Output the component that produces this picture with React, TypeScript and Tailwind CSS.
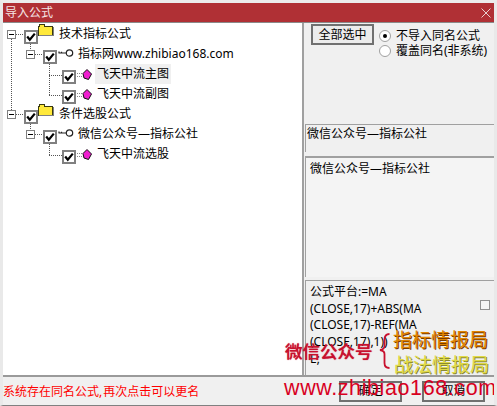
import React from "react";

const font = { fontFamily: '"Noto Sans", "Noto Sans CJK SC", sans-serif' };

function Check() {
  return (
    <span className="flex h-[14px] w-[14px] shrink-0 items-center justify-center border-2 border-[#808080] bg-white">
      <svg width="10" height="10" viewBox="0 0 10 10">
        <path d="M1.2 4.5 L3.8 7.8 L8.8 1.6" fill="none" stroke="#000" strokeWidth="2.2" />
      </svg>
    </span>
  );
}

function Expander() {
  return (
    <span className="flex h-[9px] w-[9px] shrink-0 items-center justify-center border border-[#808080] bg-white">
      <span className="h-px w-[5px] bg-black" />
    </span>
  );
}

function Folder() {
  return (
    <svg width="16" height="14" viewBox="0 0 16 14" className="shrink-0" shapeRendering="crispEdges">
      <path d="M0.5 3.5 H1.5 V1.5 H6.5 V3.5 H14.5 V12.5 H0.5 Z" fill="#ffe93b" stroke="#3a3a10" />
      <rect x="1" y="12" width="14" height="1" fill="#808080" />
      <rect x="15" y="4" width="1" height="9" fill="#808080" />
    </svg>
  );
}

function Key() {
  return (
    <svg width="16" height="10" viewBox="0 0 16 10" className="shrink-0">
      <circle cx="11.5" cy="5" r="3.2" fill="#fff" stroke="#222" strokeWidth="1.2" />
      <path d="M8 5 H0.5 M1 5 V3.5 M3.5 5 V3.8" stroke="#222" strokeWidth="1.2" fill="none" />
    </svg>
  );
}

function Gem() {
  return (
    <svg width="15" height="12" viewBox="0 0 15 12" className="shrink-0">
      <path d="M0 4.5 H6 M0 7.5 H6" stroke="#888" strokeWidth="1" strokeDasharray="1 1" />
      <path d="M10 0.5 L14.5 5 L11.5 10.5 L7 9 L6 4.5 Z" fill="#f01fd0" stroke="#111" strokeWidth="1" />
    </svg>
  );
}

function Row({ level, kind, label, selected }: { level: number; kind: "folder" | "key" | "gem"; label: string; selected?: boolean }) {
  const pad = level === 0 ? "pl-[4px]" : level === 1 ? "pl-[23px]" : "pl-[59px]";
  return (
    <div className={`flex h-[20px] items-center ${pad}`}>
      {level < 2 && <Expander />}
      {level < 2 && <span className="w-[8px] shrink-0" />}
      <span className="mt-[6px]">
        <Check />
      </span>
      {kind === "folder" && (
        <span className="-mt-[8px]">
          <Folder />
        </span>
      )}
      {kind === "key" && (
        <span className="ml-[1px] -mt-[3px]">
          <Key />
        </span>
      )}
      {kind === "gem" && (
        <span className="ml-[1px] mt-[1px]">
          <Gem />
        </span>
      )}
      <span
        className={`flex h-[20px] items-center whitespace-nowrap px-[2px] text-[12px] text-black ${selected ? "bg-[#f0f0f0]" : ""} ${kind === "gem" ? "ml-[3px]" : kind === "key" ? "ml-[2px]" : "ml-[3px]"}`}
      >
        {label}
      </span>
    </div>
  );
}

function WinButton({ children }: { children: React.ReactNode }) {
  return (
    <button className="flex h-[21px] w-[63px] items-center justify-center border-2 border-[#707070] bg-[#ececec] text-[12px] text-black">
      {children}
    </button>
  );
}

function Radio({ on, label }: { on?: boolean; label: string }) {
  return (
    <div className="flex h-[15px] items-center gap-[5px]">
      <span className="flex h-[12px] w-[12px] items-center justify-center rounded-full border border-[#a0a0a0] bg-white">
        {on && <span className="h-[4px] w-[4px] rounded-full bg-black" />}
      </span>
      <span className="whitespace-nowrap text-[12px] leading-none text-black">{label}</span>
    </div>
  );
}

function TreeLines() {
  return (
    <svg width="80" height="150" className="absolute left-0 top-0" shapeRendering="crispEdges">
      <g stroke="#555" strokeDasharray="1 1" fill="none">
        <path d="M8 16 V88" />
        <path d="M13 11 H21" />
        <path d="M27 21 V27" />
        <path d="M32 31 H40" />
        <path d="M46 41 V72 M46 52 H59 M46 72 H59" />
        <path d="M13 91 H21" />
        <path d="M27 101 V107" />
        <path d="M32 111 H40" />
        <path d="M46 121 V132 M46 132 H59" />
      </g>
    </svg>
  );
}

function Brace() {
  return (
    <svg width="12" height="36" viewBox="0 0 12 36" className="absolute left-[376px] top-[330px]">
      <path
        d="M10.5 1 C6.5 1 5.5 3 5.5 7 V13 C5.5 15.5 4 16.5 1 17 C4 17.5 5.5 18.5 5.5 21 V30 C5.5 33.5 7 35 10.5 35"
        fill="none"
        stroke="#c8102e"
        strokeWidth="1.8"
      />
    </svg>
  );
}

export default function App() {
  return (
    <div
      className="relative flex h-[406px] w-[497px] flex-col overflow-hidden border-x-[3px] border-t-[3px] border-b border-x-[#e9e9e9] border-t-[#ececec] border-b-[#808080] bg-[#f0f0f0]"
      style={font}
    >
      <div className="flex h-[20px] shrink-0 items-center justify-between border-b border-b-[#8a8a8a] bg-[#b03035] pl-[2px] pr-[3px]">
        <span className="text-[12px] leading-none text-[#f5e6e6]">导入公式</span>
        <svg width="10" height="10" viewBox="0 0 10 10">
          <path d="M0.5 0.5 L9.5 9.5 M9.5 0.5 L0.5 9.5" stroke="#e8d0d0" strokeWidth="1" />
        </svg>
      </div>

      <div className="flex h-[354px] shrink-0 border-b-2 border-b-[#9a9a9a]">
        <div className="relative w-[301px] shrink-0 border-r-2 border-r-[#a0a0a0] bg-white pt-[1px]">
          <TreeLines />
          <div className="relative">
            <Row level={0} kind="folder" label="技术指标公式" />
            <Row level={1} kind="key" label="指标网www.zhibiao168.com" />
            <Row level={2} kind="gem" label="飞天中流主图" selected />
            <Row level={2} kind="gem" label="飞天中流副图" />
            <Row level={0} kind="folder" label="条件选股公式" />
            <Row level={1} kind="key" label="微信公众号—指标公社" />
            <Row level={2} kind="gem" label="飞天中流选股" />
          </div>
        </div>

        <div className="flex min-w-0 flex-1 flex-col pl-[1px]">
          <div className="flex h-[101px] shrink-0 items-start gap-[5px] pl-[6px] pt-[1px]">
            <WinButton>全部选中</WinButton>
            <div className="flex flex-col pt-[4px]">
              <Radio on label="不导入同名公式" />
              <Radio label="覆盖同名(非系统)" />
            </div>
          </div>
          <div className="h-[28px] shrink-0 border-l border-t border-[#a0a0a0] pl-[1px] pt-[1px] text-[12px] leading-[16px] text-black">
            微信公众号—指标公社
          </div>
          <div className="mt-[4px] h-[121px] shrink-0 border-l border-t-2 border-[#a0a0a0] bg-[#f4f4f4] pl-[4px] pt-[3px] text-[12px] leading-[16px] text-black">
            微信公众号—指标公社
          </div>
          <div className="relative mt-[3px] flex-1 border-l border-t border-[#a0a0a0] bg-[#f0f0f0] pl-[4px] pt-[3px] text-[12px] leading-[16.7px] text-black">
            <div className="w-[160px]">
              公式平台:=MA
              <br />
              (CLOSE,17)+ABS(MA
              <br />
              (CLOSE,17)-REF(MA
              <br />
              (CLOSE,17),1))
              <br />
              E;
            </div>
            <span className="absolute right-[4px] top-[19px] h-[10px] w-[10px] border border-[#909090] bg-[#f4f4f4]" />
          </div>
        </div>
      </div>

      <div className="flex flex-1 items-center justify-between pr-[9px]">
        <span className="mt-[1px] whitespace-nowrap text-[12px] leading-none text-[#ff0000] [word-spacing:-2px]">系统存在同名公式, 再次点击可以更名</span>
        <div className="flex gap-[20px]">
          <WinButton>确定</WinButton>
          <WinButton>取消</WinButton>
        </div>
      </div>

      {/* Watermark laid over the dialog */}
      <div className="absolute left-[282px] top-[340px] whitespace-nowrap text-[17.5px] font-medium leading-none text-[#c8102e] [text-shadow:0_0_1px_#c8102e]">微信公众号</div>
      <Brace />
      <div className="absolute left-[390px] top-[328px] whitespace-nowrap text-[19px] leading-none text-[#e08400] [text-shadow:1px_1px_0_#7a3b00]">指标情报局</div>
      <div className="absolute left-[391px] top-[353px] whitespace-nowrap text-[19px] leading-none text-[#e0da48] [text-shadow:1px_1px_0_#8a8a30]">战法情报局</div>
      <div className="absolute left-[281px] top-[375px] whitespace-nowrap text-[21.5px] leading-none tracking-[0.6px] text-[#d8001f]" style={{ fontFamily: '"Liberation Sans", sans-serif' }}>www.zhibiao168.com</div>
    </div>
  );
}
